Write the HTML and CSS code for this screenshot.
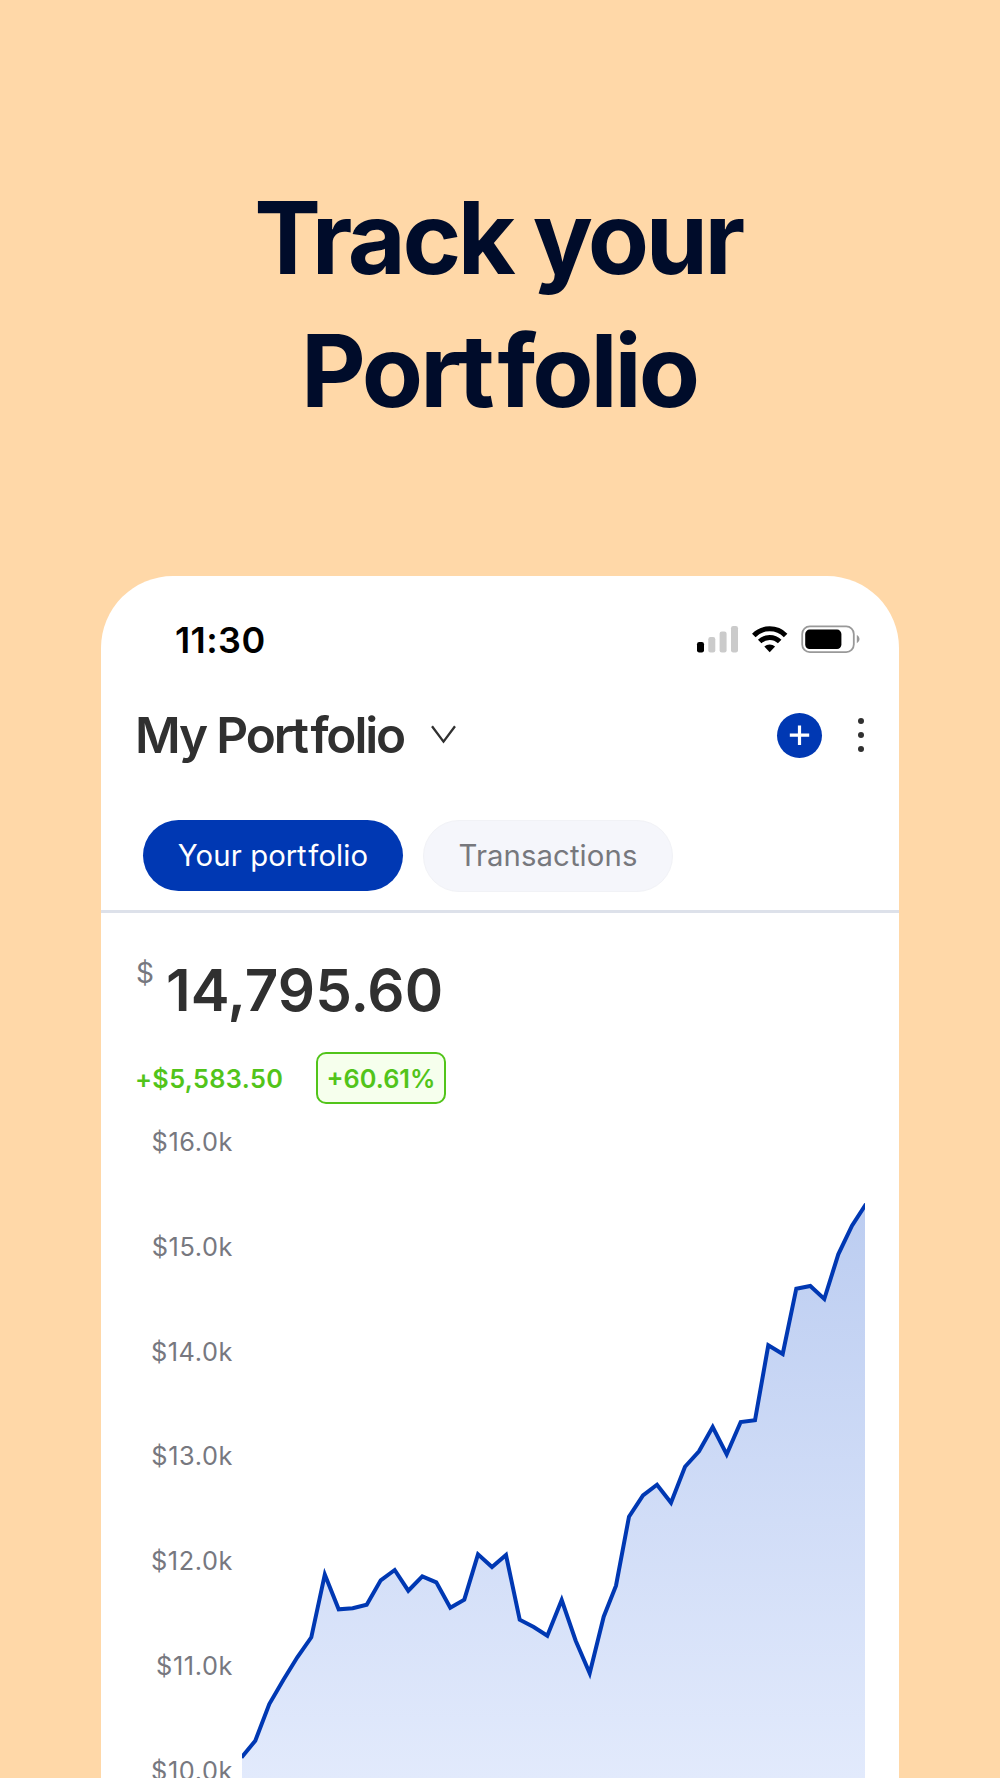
FILE: index.html
```html
<!DOCTYPE html>
<html lang="en">
<head>
  <meta charset="UTF-8" />
  <meta name="viewport" content="width=device-width, initial-scale=1.0"/>
  <title>Track your Portfolio</title>
  <link rel="stylesheet" href="styles.css">
</head>
<body>

<h1 class="headline"><span class="line-one">Track your</span><br><span class="line-two">Por<span class="loose">t</span>folio</span></h1>

<div class="phone">
  <div class="status-bar">
    <span class="time">11:30</span>
    <svg class="status-icons" width="164" height="30" viewBox="0 0 164 30">
      <rect x="1" y="18" width="7" height="10.5" rx="2.2"/>
      <g fill="#cbcbcb">
        <rect x="12.3" y="13" width="7" height="15.5" rx="2.2"/>
        <rect x="23.6" y="7.5" width="7" height="21" rx="2.2"/>
        <rect x="35" y="2" width="7" height="26.5" rx="2.2"/>
      </g>
      <g fill="none" stroke="#000" stroke-width="5">
        <path d="M57.8 11.4 A22.5 22.5 0 0 1 89.6 11.4"/>
        <path d="M63.7 17.6 A14.2 14.2 0 0 1 83.7 17.6"/>
      </g>
      <path d="M68.3 22.6 A8 8 0 0 1 79.1 22.6 L73.7 28.2 Z"/>
      <rect x="106.2" y="2.4" width="51.6" height="25.8" rx="7.6" fill="none" stroke="#999" stroke-width="1.8"/>
      <rect x="109.2" y="5.6" width="36.2" height="19.4" rx="4.4"/>
      <path d="M160.8 11 C164.4 12.8 164.4 17.4 160.8 19.2 Z" fill="#999"/>
    </svg>
  </div>

  <div class="title-bar">
    <h2>My Por<span class="loose">t</span>folio</h2>
    <svg class="chevron" width="28" height="20" viewBox="0 0 28 20">
      <path d="M2 1.2 L13.5 16.6 L25 1.2" fill="none" stroke="#303030" stroke-width="2.3"/>
    </svg>
    <button class="add" aria-label="Add">
      <svg width="45" height="45" viewBox="0 0 45 45">
        <path d="M12.8 22.2 H32.2 M22.5 12.5 V31.9" stroke="#fff" stroke-width="3.2"/>
      </svg>
    </button>
    <svg class="dots" width="8" height="36" viewBox="0 0 8 36">
      <circle cx="4" cy="4" r="3"/>
      <circle cx="4" cy="18" r="3"/>
      <circle cx="4" cy="32" r="3"/>
    </svg>
  </div>

  <div class="tabs">
    <button class="tab active">Your por<span class="loose">t</span>folio</button>
    <button class="tab">Transactions</button>
  </div>

  <div class="balance">
    <span class="currency">$</span>
    <span class="amount">14,795.60</span>
  </div>
  <div class="change">
    <span class="gain">+$5,583.50</span>
    <span class="badge">+60.61%</span>
  </div>

  <div class="chart">
    <div class="axis">
      <span>$16.0k</span>
      <span>$15.0k</span>
      <span>$14.0k</span>
      <span>$13.0k</span>
      <span>$12.0k</span>
      <span>$11.0k</span>
      <span>$10.0k</span>
    </div>
    <svg class="graph" width="623" height="688" viewBox="242 1090 623 688">
      <defs>
        <linearGradient id="fill" gradientUnits="userSpaceOnUse" x1="0" y1="1205" x2="0" y2="1778">
          <stop offset="0" stop-color="#bccdf1"/>
          <stop offset="1" stop-color="#e2eafc"/>
        </linearGradient>
      </defs>
      <path id="area" fill="url(#fill)"/>
      <polyline id="line" fill="none" stroke="#0038b3" stroke-width="4"/>
    </svg>
  </div>
</div>

<script>
  const points = [
    [241.5, 1757.5], [255.3, 1740.7], [269.3, 1704], [283.3, 1680], [297.3, 1657.3],
    [311.3, 1637.3], [324.8, 1574.5], [338.7, 1609.3], [352.7, 1608.3], [366.7, 1604.7],
    [380.7, 1580.3], [394.7, 1570], [408.3, 1590.7], [422.3, 1576.3], [436.3, 1582.3],
    [450.3, 1607.7], [464.3, 1599.7], [478, 1554.3], [492, 1567], [506, 1555],
    [519.7, 1619.7], [533.7, 1627], [547.3, 1635.7], [561.7, 1600], [575.7, 1640.7],
    [589.7, 1673.3], [603.7, 1616.7], [616, 1585.7], [629, 1516.7], [643, 1495.3],
    [657, 1484.7], [671, 1502.7], [685, 1466.7], [699, 1451.3], [712.7, 1427],
    [726.7, 1454.3], [740.7, 1422], [755, 1420.3], [768.3, 1345.3], [782.7, 1354],
    [796.3, 1288.7], [810.3, 1286], [824.3, 1299], [838.3, 1254.3], [852, 1225.7],
    [866, 1204]
  ];
  const line = points.map(p => p.join(',')).join(' ');
  document.getElementById('line').setAttribute('points', line);
  document.getElementById('area').setAttribute('d', 'M' + line + ' V1778 H241.5 Z');
</script>
</body>
</html>
```

FILE: styles.css
```css
* {
  box-sizing: border-box;
}
body {
  margin: 0;
  height: 1778px;
  overflow: hidden;
  display: flex;
  flex-direction: column;
  align-items: center;
  background: #ffd8a8;
  font-family: Inter, 'Liberation Sans', sans-serif;
  color: #303030;
}
.headline {
  margin: 0;
  padding-top: 171px;
  height: 576px;
  font-size: 100px;
  font-weight: 700;
  line-height: 133.3px;
  text-align: center;
  color: #000c2a;
}
.line-one {
  margin-left: -4px;
  letter-spacing: -3.4px;
}
.line-two {
  margin-left: -2px;
  letter-spacing: -3px;
}
/* keeps the crossbars of t and f apart */
.loose {
  letter-spacing: 0.03em;
}
.phone {
  width: 798px;
  height: 1202px;
  padding-top: 47px;
  border-radius: 72px 72px 0 0;
  background: #fff;
  overflow: hidden;
  display: flex;
  flex-direction: column;
}
.phone > div {
  flex-shrink: 0;
}
.status-bar {
  height: 34px;
  padding: 0 39px 0 74px;
  display: flex;
  align-items: center;
  justify-content: space-between;
}
.time {
  font-size: 36px;
  font-weight: 600;
  letter-spacing: 0.4px;
  color: #000;
}
.status-icons {
  margin-bottom: 2px;
}
.title-bar {
  height: 60px;
  margin-top: 48px;
  padding: 0 34px;
  display: flex;
  align-items: center;
}
h2 {
  width: 269px;
  margin: 0;
  font-size: 49.5px;
  font-weight: 600;
  letter-spacing: -2.1px;
  white-space: nowrap;
}
.chevron {
  margin-left: 26px;
}
.add {
  width: 45px;
  height: 45px;
  margin-left: auto;
  padding: 0;
  border: none;
  border-radius: 50%;
  background: #0038b3;
}
.add svg {
  display: block;
}
.dots {
  margin-left: 35px;
  fill: #303030;
}
.tabs {
  height: 148px;
  padding: 55px 42px 0;
  border-bottom: 3px solid #dde1ea;
  display: flex;
  gap: 20px;
}
.tab {
  width: 250px;
  height: 72px;
  padding: 0;
  border: 1px solid #f1f2f6;
  border-radius: 36px;
  background: #f5f6fb;
  font-family: Inter, 'Liberation Sans', sans-serif;
  font-size: 29.3px;
  line-height: 70px;
  letter-spacing: 0.1px;
  color: #77787d;
}
.tab.active {
  width: 260px;
  height: 71px;
  border: none;
  background: #0038b3;
  letter-spacing: 0.1px;
  color: #fff;
}
.tab .loose {
  letter-spacing: 0.06em;
}
.balance {
  height: 102px;
  padding: 27px 35px 0;
  display: flex;
  align-items: flex-start;
}
.currency {
  width: 30px;
  font-size: 28px;
  line-height: 67px;
  color: #77787f;
}
.amount {
  font-size: 58.3px;
  font-weight: 600;
  line-height: 101px;
}
.change {
  height: 75px;
  padding: 37px 34px 0;
  display: flex;
  align-items: flex-start;
  font-size: 25.3px;
  font-weight: 600;
  color: #52c41a;
}
.gain {
  width: 181px;
  line-height: 54px;
  letter-spacing: 0.35px;
}
.badge {
  width: 130px;
  height: 52px;
  border: 2px solid #52c41a;
  border-radius: 10px;
  background: #f6ffed;
  line-height: 50px;
  text-align: center;
}
.chart {
  height: 688px;
  display: flex;
}
.axis {
  width: 132px;
  margin-right: 9px;
  display: flex;
  flex-direction: column;
  text-align: right;
  font-size: 25.3px;
  line-height: 104.8px;
  letter-spacing: 0.6px;
  color: #77787f;
}
.graph {
  flex-shrink: 0;
}
```
